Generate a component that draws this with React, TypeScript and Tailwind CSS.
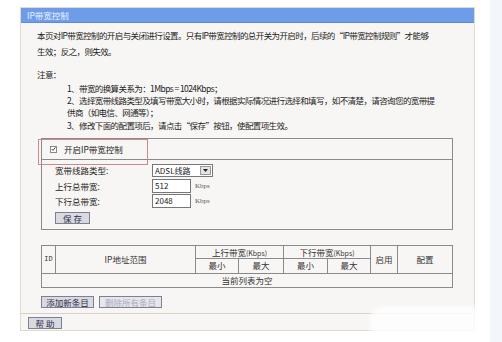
import React from "react";

const font = { fontFamily: '"Noto Sans CJK SC", "Noto Sans", sans-serif' };

function Btn({ children, disabled = false, w }: { children: React.ReactNode; disabled?: boolean; w: string }) {
  return (
    <div
      className={`${w} h-[12px] flex items-center justify-center border border-[#7d7f93] text-[8.5px] leading-none ${
        disabled ? "bg-[#e6e6ec] text-[#a9abbb]" : "bg-[#d9d9e2] text-[#2b2d45]"
      }`}
    >
      {children}
    </div>
  );
}

export default function App() {
  return (
    <div className="w-[502px] h-[342px] bg-white relative overflow-hidden flex" style={font}>
      <div className="pl-[20px] pt-[7px]">
        <div className="w-[455px] h-[324px] border border-[#e2d9c6] bg-[#f8f6f4] flex flex-col">
          {/* header */}
          <div className="h-[15px] bg-[#6d9ce8] border-b border-[#5d8ad8] text-[8.5px] leading-[15px] text-[#eef4ff] pl-[6px]">
            IP带宽控制
          </div>

          <div className="pl-[16px] text-[8.5px] tracking-[-0.6px] text-[#222]">
            <p className="mt-[4px] leading-[16px] whitespace-nowrap">
              本页对IP带宽控制的开启与关闭进行设置。只有IP带宽控制的总开关为开启时，后续的“IP带宽控制规则”才能够
              <br />
              生效；反之，则失效。
            </p>
            <p className="mt-[7px] leading-[16px]">注意：</p>
            <div className="pl-[30px] leading-[12px] whitespace-nowrap">
              <p>1、带宽的换算关系为：1Mbps = 1024Kbps；</p>
              <p>
                2、选择宽带线路类型及填写带宽大小时，请根据实际情况进行选择和填写，如不清楚，请咨询您的宽带提
                <br />
                供商（如电信、网通等）；
              </p>
              <p className="mt-[1px]">3、修改下面的配置项后，请点击“保存”按钮，使配置项生效。</p>
            </div>

            {/* settings box */}
            <div className="relative mt-[7px] ml-[4px] w-[412px] h-[92px] border border-[#8a8a8a] tracking-normal">
              <div className="h-[21px] border-b border-[#8a8a8a] flex items-center pl-[8px] gap-[7px]">
                <div className="w-[7px] h-[7px] border border-[#888] bg-white flex items-center justify-center">
                  <svg width="6" height="6" viewBox="0 0 6 6">
                    <path d="M0.8 3 L2.4 4.7 L5.3 1" stroke="#333" strokeWidth="1.1" fill="none" />
                  </svg>
                </div>
                <span>开启IP带宽控制</span>
              </div>
              <div className="absolute left-[-4px] top-[0px] w-[110px] h-[26px] border border-[#c98a8a]" />

              <div className="pl-[13px] pt-[4px] grid grid-cols-[97px_1fr] leading-[14px]">
                <span className="leading-[13px]">宽带线路类型:</span>
                <div className="w-[61px] h-[13px] border border-[#777] bg-white flex items-center">
                  <span className="flex-1 pl-[2px] text-[8px] leading-none">ADSL线路</span>
                  <div className="w-[11px] h-[9px] mr-[1px] bg-[#e4e4e8] border border-[#999] flex items-center justify-center">
                    <svg width="5" height="3" viewBox="0 0 5 3">
                      <path d="M0 0 L5 0 L2.5 3 Z" fill="#222" />
                    </svg>
                  </div>
                </div>
                <span className="mt-[2px]">上行总带宽:</span>
                <div className="mt-[2px] flex items-center gap-[4px]">
                  <div className="w-[39px] h-[14px] border border-[#777] bg-white pl-[2px] text-[8px] leading-[12px]">512</div>
                  <span className="text-[7px] text-[#555]" style={{ fontFamily: '"Liberation Serif", serif' }}>
                    Kbps
                  </span>
                </div>
                <span className="mt-[1px]">下行总带宽:</span>
                <div className="mt-[1px] flex items-center gap-[4px]">
                  <div className="w-[39px] h-[14px] border border-[#777] bg-white pl-[2px] text-[8px] leading-[12px]">2048</div>
                  <span className="text-[7px] text-[#555]" style={{ fontFamily: '"Liberation Serif", serif' }}>
                    Kbps
                  </span>
                </div>
              </div>
              <div className="pl-[13px] mt-[4px]">
                <Btn w="w-[35px]">保 存</Btn>
              </div>
            </div>

            {/* rules table */}
            <div className="mt-[15px] ml-[4px] w-[412px] border border-[#8a8a8a] text-[#333] tracking-normal">
              <div className="grid grid-cols-[14px_140px_43px_45px_44px_43px_27px_1fr] grid-rows-[13px_14px] text-center leading-[13px]">
                <div className="row-span-2 border-r border-[#8a8a8a] flex items-center justify-center text-[7px]" style={{ fontFamily: '"Liberation Mono", monospace' }}>
                  ID
                </div>
                <div className="row-span-2 border-r border-[#8a8a8a] flex items-center justify-center">IP地址范围</div>
                <div className="col-span-2 border-r border-b border-[#8a8a8a]">
                  上行带宽<span className="text-[7px]">(Kbps)</span>
                </div>
                <div className="col-span-2 border-r border-b border-[#8a8a8a]">
                  下行带宽<span className="text-[7px]">(Kbps)</span>
                </div>
                <div className="row-span-2 border-r border-[#8a8a8a] flex items-center justify-center">启用</div>
                <div className="row-span-2 flex items-center justify-center">配置</div>
                <div className="border-r border-[#8a8a8a]">最小</div>
                <div className="border-r border-[#8a8a8a]">最大</div>
                <div className="border-r border-[#8a8a8a]">最小</div>
                <div className="border-r border-[#8a8a8a]">最大</div>
              </div>
              <div className="h-[14px] border-t border-[#8a8a8a] text-center leading-[13px]">当前列表为空</div>
            </div>

            <div className="mt-[8px] ml-[4px] flex gap-[5px] tracking-normal">
              <Btn w="w-[53px]">添加新条目</Btn>
              <Btn w="w-[63px]" disabled>
                删除所有条目
              </Btn>
            </div>
          </div>

          <div className="mt-[5px] border-t border-[#d8d2c4]" />
          <div className="pl-[7px] mt-[3px]">
            <Btn w="w-[34px]">帮 助</Btn>
          </div>
        </div>
      </div>

      {/* faint watermark */}
      <div className="absolute left-[370px] top-[306px] w-[118px] h-[34px] rounded-[14px] bg-white/80 blur-[2px]" />
      <div className="absolute right-0 top-0 w-[12px] h-[342px] bg-[#f3f7fc]" />
    </div>
  );
}
